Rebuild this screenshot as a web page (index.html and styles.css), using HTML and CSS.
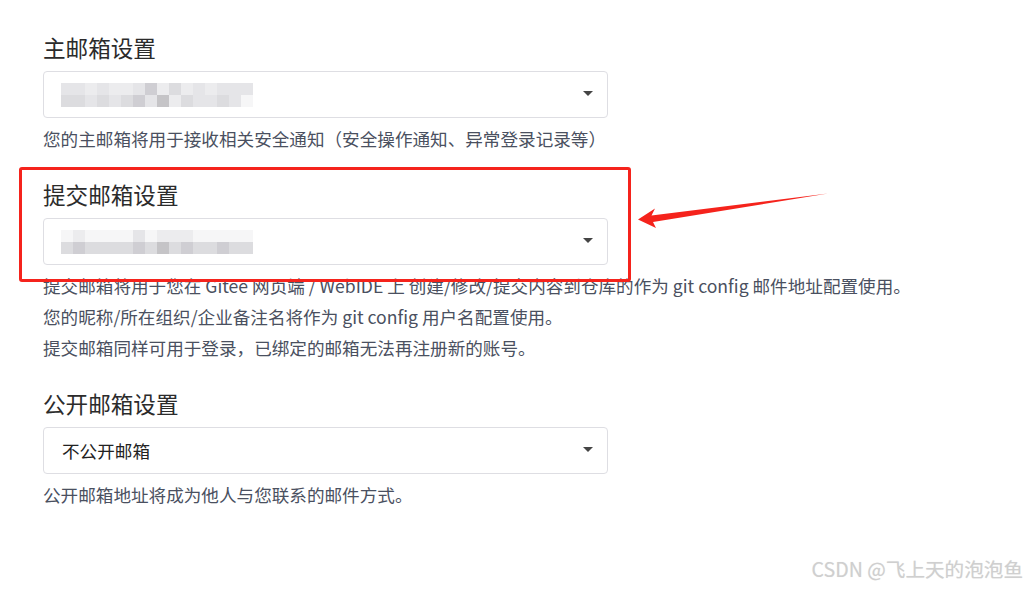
FILE: index.html
```html
<!DOCTYPE html>
<html lang="zh-CN">
<head>
<meta charset="utf-8">
<title>邮箱设置</title>
<link rel="stylesheet" href="styles.css">
</head>
<body>
<div class="page">
  <section class="group first">
    <h2 class="title">主邮箱设置</h2>
    <div class="select">
      <div class="mosaic">
        <span class="c b"></span><span class="c b"></span><span class="c a"></span><span class="c b"></span><span class="c a"></span><span class="c a"></span><span class="c b"></span><span class="c d"></span><span class="c a"></span><span class="c c2"></span><span class="c a"></span><span class="c b"></span><span class="c a"></span><span class="c b"></span><span class="c b"></span><span class="c b"></span>
        <span class="c c2"></span><span class="c c2"></span><span class="c b"></span><span class="c c2"></span><span class="c b"></span><span class="c c2"></span><span class="c d"></span><span class="c b"></span><span class="c e"></span><span class="c a"></span><span class="c c2"></span><span class="c b"></span><span class="c b"></span><span class="c c2"></span><span class="c b"></span><span class="c w"></span>
      </div>
      <span class="caret"></span>
    </div>
    <p class="help">您的主邮箱将用于接收相关安全通知（安全操作通知、异常登录记录等）</p>
  </section>

  <section class="group">
    <h2 class="title">提交邮箱设置</h2>
    <div class="select">
      <div class="mosaic">
        <span class="c w"></span><span class="c a"></span><span class="c w"></span><span class="c w"></span><span class="c w"></span><span class="c w"></span><span class="c b"></span><span class="c w"></span><span class="c a"></span><span class="c a"></span><span class="c a"></span><span class="c w"></span><span class="c w"></span><span class="c w"></span><span class="c w"></span><span class="c w"></span>
        <span class="c c2"></span><span class="c d"></span><span class="c c2"></span><span class="c c2"></span><span class="c c2"></span><span class="c c2"></span><span class="c d"></span><span class="c c2"></span><span class="c e"></span><span class="c c2"></span><span class="c d"></span><span class="c c2"></span><span class="c c2"></span><span class="c d"></span><span class="c c2"></span><span class="c c2"></span>
      </div>
      <span class="caret"></span>
    </div>
    <div class="help multi">
      <p>提交邮箱将用于您在 Gitee 网页端 / WebIDE 上 创建/修改/提交内容到仓库的作为 git config 邮件地址配置使用。</p>
      <p>您的昵称/所在组织/企业备注名将作为 git config 用户名配置使用。</p>
      <p>提交邮箱同样可用于登录，已绑定的邮箱无法再注册新的账号。</p>
    </div>
  </section>

  <section class="group">
    <h2 class="title">公开邮箱设置</h2>
    <div class="select">
      <span class="value">不公开邮箱</span>
      <span class="caret"></span>
    </div>
    <p class="help">公开邮箱地址将成为他人与您联系的邮件方式。</p>
  </section>

  <div class="highlight"></div>
  <svg class="arrow" width="200" height="40" viewBox="630 188 200 40" xmlns="http://www.w3.org/2000/svg">
    <polygon points="638,219.5 655,208.5 651.5,215.5 828,193.5 653,222 656,228" fill="#f5231c"/>
  </svg>
  <div class="watermark">CSDN @飞上天的泡泡鱼</div>
</div>
</body>
</html>
```

FILE: styles.css
```css
html, body {
  margin: 0;
  padding: 0;
  background: #ffffff;
}

body {
  font-family: "Noto Sans CJK SC", "Microsoft YaHei", sans-serif;
  color: #333333;
}

.page {
  position: relative;
  width: 1027px;
  height: 589px;
  overflow: hidden;
  box-sizing: border-box;
  padding: 32px 0 0 43px;
}

.group {
  margin-top: 25px;
}

.group.first {
  margin-top: 0;
}

.title {
  margin: 0;
  font-size: 22.6px;
  font-weight: 400;
  line-height: 32px;
  color: #2b2b2b;
}

.select {
  margin-top: 7px;
  width: 565px;
  height: 47px;
  box-sizing: border-box;
  border: 1px solid #dedee3;
  border-radius: 4px;
  display: flex;
  align-items: center;
  justify-content: space-between;
  padding: 0 14px 0 17px;
  background: #fff;
}

.value {
  font-size: 17.6px;
  color: #222;
  line-height: 24px;
  margin-left: 1px;
}

.caret {
  width: 0;
  height: 0;
  border-left: 5px solid transparent;
  border-right: 5px solid transparent;
  border-top: 5px solid #454545;
  margin-top: -2px;
}

.mosaic {
  display: grid;
  grid-template-columns: repeat(16, 12px);
  grid-template-rows: 12px 12px;
}

.c { display: block; }
.c.w { background: #f6f6f7; }
.c.a { background: #ececee; }
.c.b { background: #e5e5e8; }
.c.c2 { background: #dcdcdf; }
.c.d { background: #cfced3; }
.c.e { background: #c5c4c7; }

.help {
  margin: 5px 0 0;
  font-size: 17.6px;
  line-height: 31px;
  color: #4a5060;
}

.help.multi p {
  margin: 0;
}

.highlight {
  position: absolute;
  left: 19px;
  top: 167px;
  width: 612px;
  height: 115px;
  box-sizing: border-box;
  border: 3px solid #f5231c;
  border-radius: 3px;
}

.arrow {
  position: absolute;
  left: 630px;
  top: 188px;
}

.watermark {
  position: absolute;
  right: 4px;
  top: 556px;
  font-family: "Noto Sans CJK SC", sans-serif;
  font-size: 19.6px;
  line-height: 26px;
  color: #cfcfcf;
  text-shadow: 0 0 1px #e6e6e6;
}
```
